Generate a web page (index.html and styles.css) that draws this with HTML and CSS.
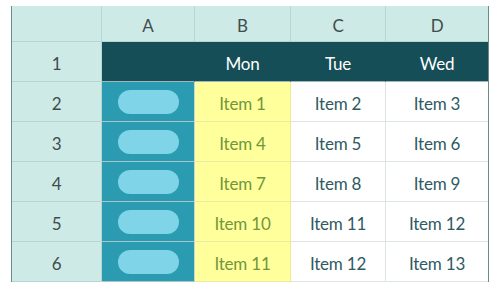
FILE: index.html
```html
<!DOCTYPE html>
<html>
<head>
<meta charset="utf-8">
<link rel="stylesheet" href="styles.css">
</head>
<body>
<div class="sheet">
  <div class="cell corner"></div>
  <div class="cell colhead">A</div>
  <div class="cell colhead">B</div>
  <div class="cell colhead">C</div>
  <div class="cell colhead last">D</div>

  <div class="cell rowhead">1</div>
  <div class="cell dark"></div>
  <div class="cell dark">Mon</div>
  <div class="cell dark">Tue</div>
  <div class="cell dark last">Wed</div>

  <div class="cell rowhead">2</div>
  <div class="cell teal"><span class="pill"></span></div>
  <div class="cell yellow">Item 1</div>
  <div class="cell white">Item 2</div>
  <div class="cell white last">Item 3</div>

  <div class="cell rowhead">3</div>
  <div class="cell teal"><span class="pill"></span></div>
  <div class="cell yellow">Item 4</div>
  <div class="cell white">Item 5</div>
  <div class="cell white last">Item 6</div>

  <div class="cell rowhead">4</div>
  <div class="cell teal"><span class="pill"></span></div>
  <div class="cell yellow">Item 7</div>
  <div class="cell white">Item 8</div>
  <div class="cell white last">Item 9</div>

  <div class="cell rowhead">5</div>
  <div class="cell teal"><span class="pill"></span></div>
  <div class="cell yellow">Item 10</div>
  <div class="cell white">Item 11</div>
  <div class="cell white last">Item 12</div>

  <div class="cell rowhead">6</div>
  <div class="cell teal"><span class="pill"></span></div>
  <div class="cell yellow">Item 11</div>
  <div class="cell white">Item 12</div>
  <div class="cell white last">Item 13</div>
</div>
</body>
</html>
```
FILE: styles.css
```css
html, body {
  margin: 0;
  padding: 0;
  background: #ffffff;
}

body {
  font-family: "Lato", "Open Sans", sans-serif;
}

.sheet {
  margin: 6px 0 0 11px;
  width: 476px;
  display: grid;
  grid-template-columns: 90px 93px 96px 95px 102px;
  grid-template-rows: 36px repeat(6, 40px);
  border-left: 1px solid #6a8c8c;
  border-right: 1px solid #6a8c8c;
}

.cell {
  display: flex;
  align-items: center;
  justify-content: center;
  padding-top: 3px;
  font-size: 17px;
  letter-spacing: -0.2px;
  box-sizing: border-box;
  border-right: 1px solid #dde4e4;
  border-bottom: 1px solid #dde4e4;
}

.cell.last {
  border-right: none;
}

.corner,
.colhead,
.rowhead {
  background: #cdeae7;
  color: #3f4d4d;
  border-color: #b7d5d2;
}

.colhead {
  padding-top: 4px;
}

.rowhead {
  border-bottom-color: #b7d5d2;
}

.dark {
  background: #154e57;
  color: #ffffff;
  border-right-color: #154e57;
  border-bottom-color: #9fb7b9;
}

.teal {
  background: #2a9bb1;
  padding-top: 1px;
  border-right-color: #c9d6d6;
  border-bottom-color: #a9c6cc;
}

.pill {
  display: block;
  width: 61px;
  height: 24px;
  border-radius: 12px;
  background: #7fd4e8;
}

.yellow {
  background: #ffff9c;
  color: #71973a;
  border-right-color: #ecec8a;
  border-bottom-color: #ececa0;
}

.white {
  background: #ffffff;
  color: #2f5a62;
}
```
